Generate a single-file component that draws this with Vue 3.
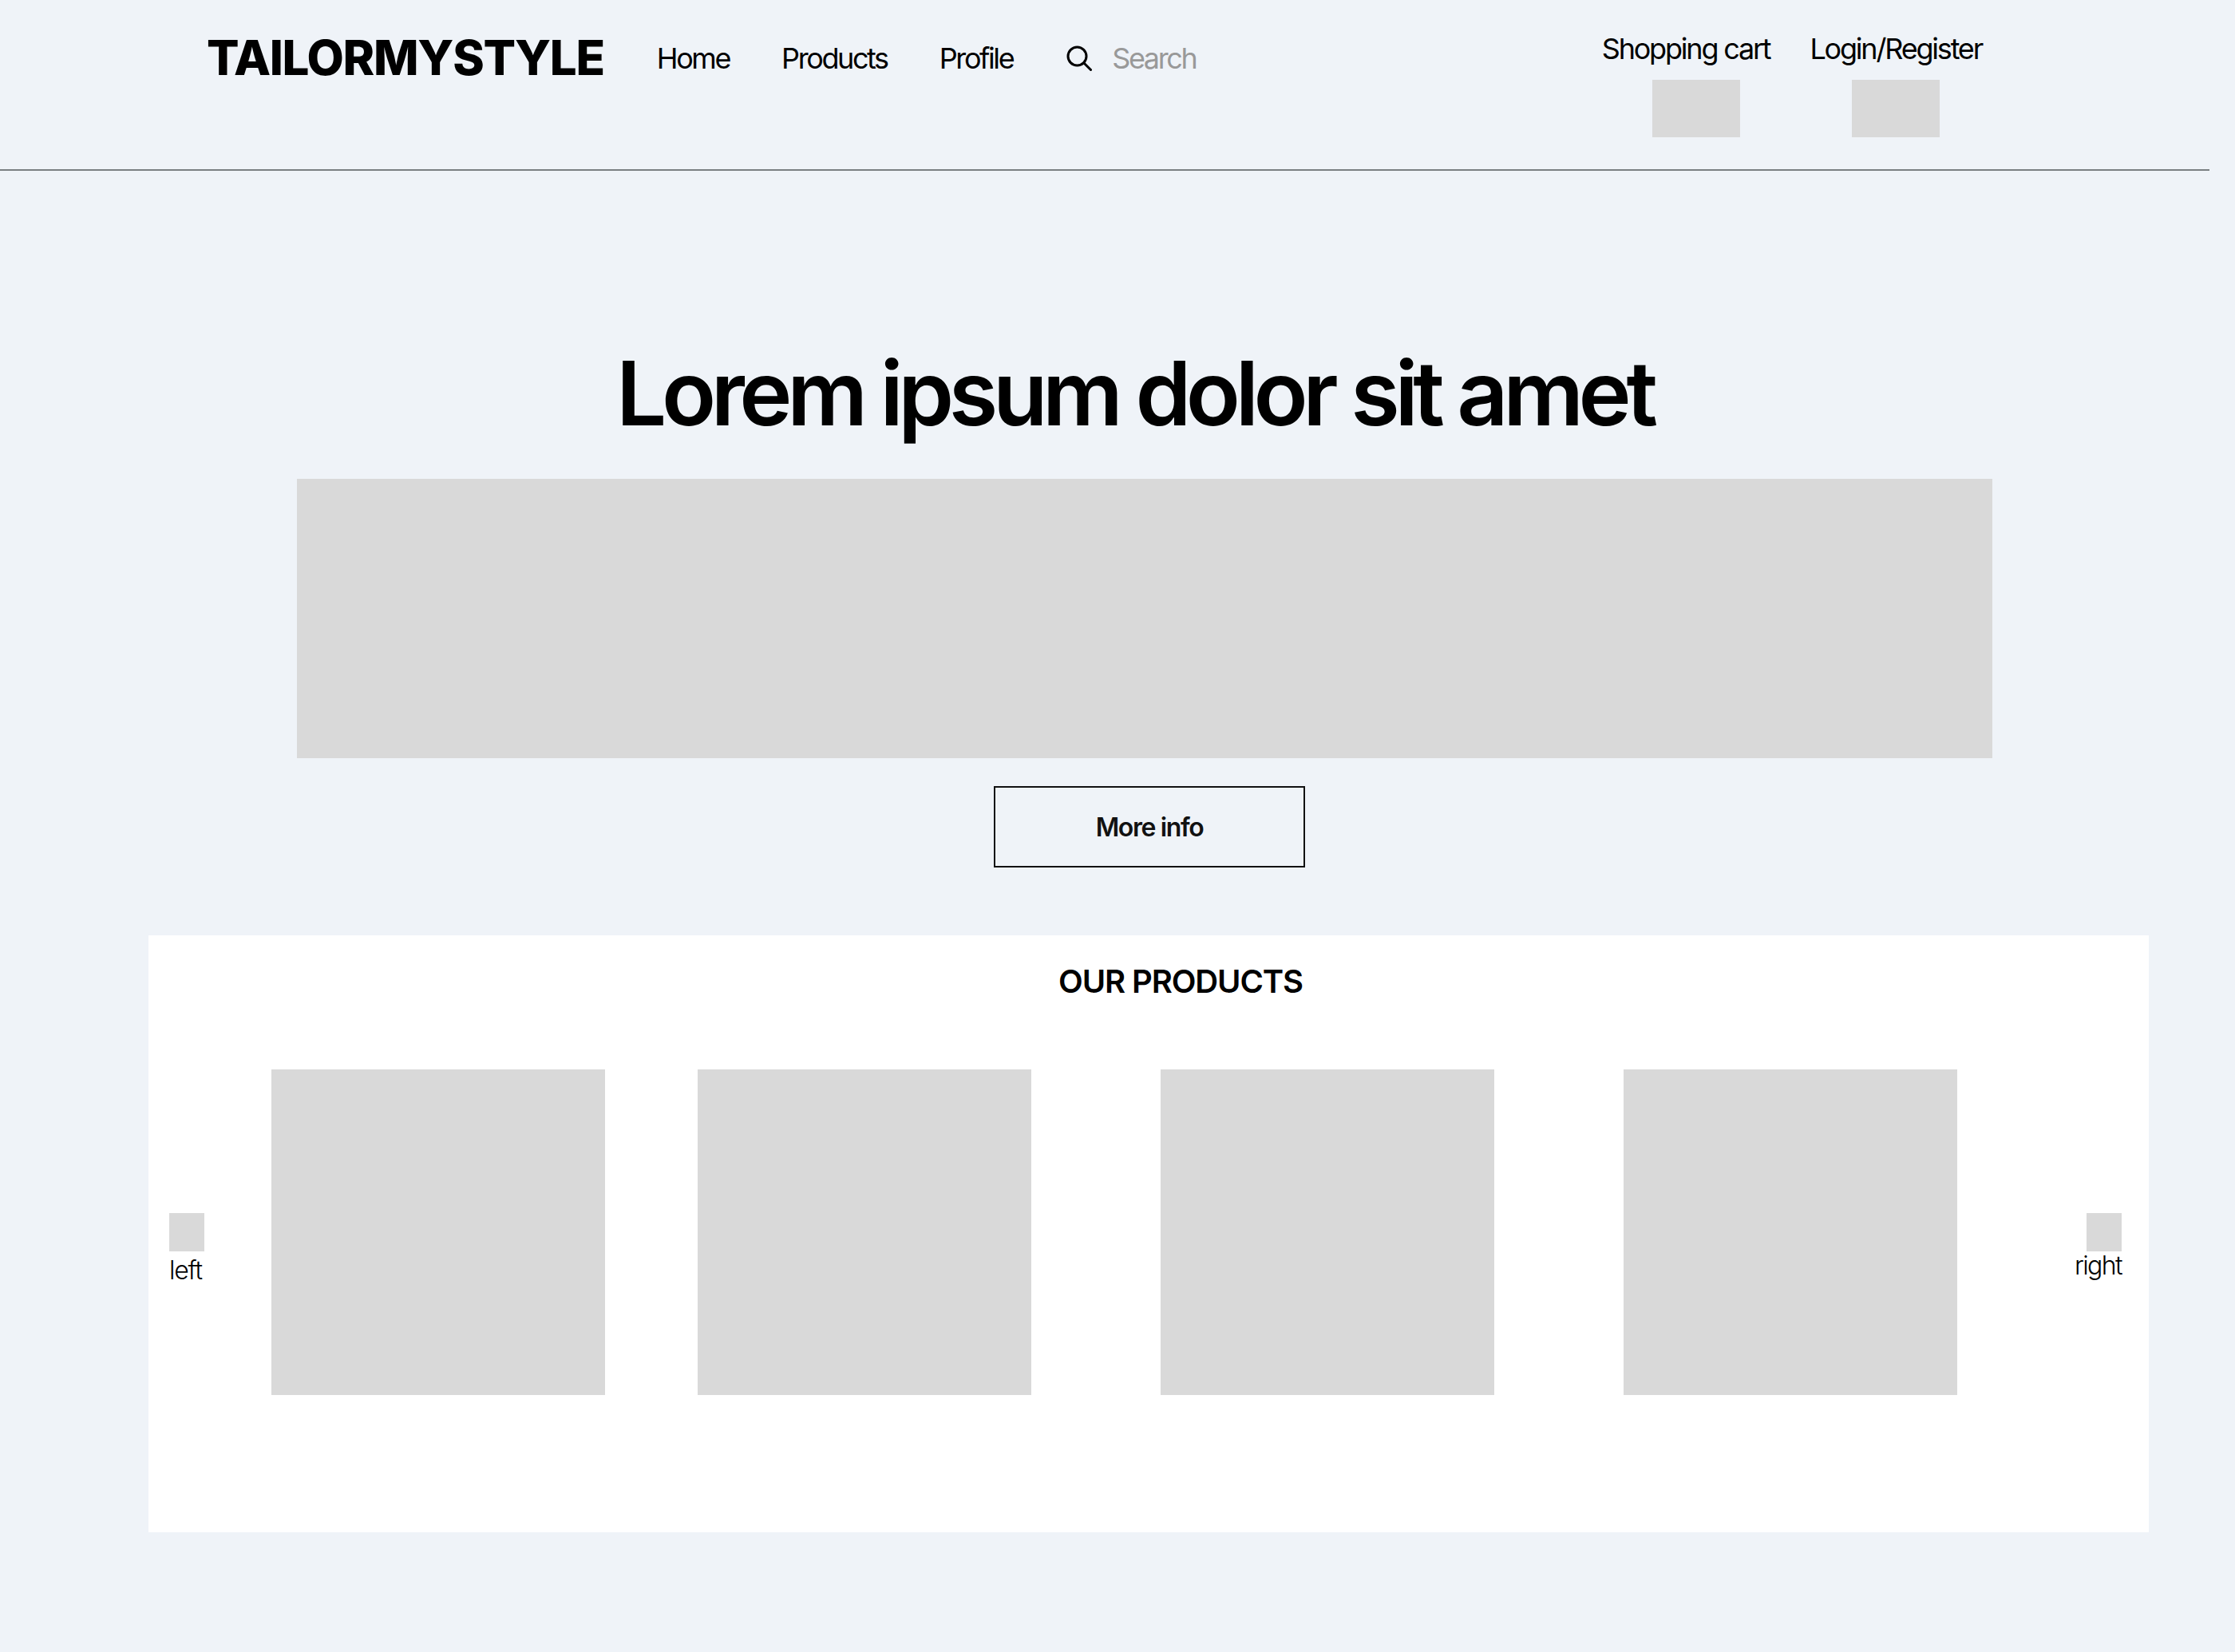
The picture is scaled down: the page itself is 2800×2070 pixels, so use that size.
<template>
  <div class="page">
    <!-- Header -->
    <header class="topbar">
      <div class="logo">TAILORMYSTYLE</div>
      <nav class="nav">
        <a v-for="link in links" :key="link" href="#">{{ link }}</a>
      </nav>
      <div class="search">
        <svg class="search-icon" viewBox="0 0 32 32" fill="none" stroke="#000" stroke-width="3" stroke-linecap="round">
          <circle cx="13.5" cy="13.5" r="11.5" />
          <path d="M22 22 L30.5 30.5" />
        </svg>
        <span>Search</span>
      </div>
      <div class="account">
        <div class="account-item cart">
          <span>Shopping cart</span>
          <div class="placeholder"></div>
        </div>
        <div class="account-item login">
          <span>Login/Register</span>
          <div class="placeholder"></div>
        </div>
      </div>
    </header>

    <!-- Hero -->
    <section class="hero">
      <h1>Lorem ipsum dolor sit amet</h1>
      <div class="hero-image"></div>
      <button class="more-btn">More info</button>
    </section>

    <!-- Products -->
    <section class="products">
      <h2>OUR PRODUCTS</h2>
      <div class="carousel">
        <div class="arrow left">
          <div class="arrow-box"></div>
          <span>left</span>
        </div>
        <div class="card" v-for="n in 4" :key="n"></div>
        <div class="arrow right">
          <div class="arrow-box"></div>
          <span>right</span>
        </div>
      </div>
    </section>
  </div>
</template>

<script setup>
const links = ['Home', 'Products', 'Profile']
</script>

<style scoped>
.page {
  width: 2800px;
  height: 2070px;
  overflow: hidden;
  background-color: #eff3f8;
  color: #000;
  font-family: Inter, "Liberation Sans", sans-serif;
}

.topbar {
  width: 2768px;
  height: 214px;
  box-sizing: border-box;
  border-bottom: 2px solid #7a7f82;
  padding-left: 259px;
  display: flex;
  align-items: flex-start;
}

.logo {
  margin-top: 36px;
  font-size: 60px;
  line-height: 72px;
  font-weight: 800;
  letter-spacing: -1.3px;
  white-space: nowrap;
}

.nav {
  margin-top: 51px;
  margin-left: 66px;
  display: flex;
  gap: 65px;
}

.nav a {
  font-size: 36px;
  line-height: 44px;
  letter-spacing: -2.4px;
  color: #000;
  text-decoration: none;
}

.search {
  margin-top: 51px;
  margin-left: 67px;
  display: flex;
  align-items: center;
  gap: 25px;
  font-size: 36px;
  line-height: 44px;
  letter-spacing: -2.4px;
  color: #999;
}

.search-icon {
  width: 32px;
  height: 32px;
}

.account {
  margin-left: auto;
  margin-right: 285px;
  margin-top: 39px;
  display: flex;
  gap: 50px;
}

.account-item {
  display: flex;
  flex-direction: column;
  font-size: 36px;
  line-height: 44px;
  letter-spacing: -2.2px;
  white-space: nowrap;
}

.placeholder {
  width: 110px;
  height: 72px;
  margin-top: 17px;
  background-color: #d9d9d9;
}

.cart .placeholder {
  margin-left: 63px;
}

.login .placeholder {
  margin-left: 53px;
}

.hero {
  display: flex;
  flex-direction: column;
  align-items: flex-start;
}

.hero h1 {
  margin: 210px 0 0 772px;
  font-size: 112px;
  line-height: 136px;
  font-weight: 600;
  letter-spacing: -6.4px;
  white-space: nowrap;
}

.hero-image {
  width: 2124px;
  height: 350px;
  margin: 40px 0 0 372px;
  background-color: #d9d9d9;
}

.more-btn {
  width: 390px;
  height: 102px;
  margin: 35px 0 0 1245px;
  border: 2px solid #111;
  background: transparent;
  color: #111;
  font-family: inherit;
  font-size: 32px;
  font-weight: 600;
  letter-spacing: -1.4px;
}

.products {
  width: 2506px;
  height: 748px;
  margin: 85px 0 0 186px;
  background-color: #fff;
  padding-top: 34px;
  box-sizing: border-box;
}

.products h2 {
  margin: 0 0 0 1140px;
  font-size: 40px;
  line-height: 48px;
  font-weight: 600;
  letter-spacing: -1.1px;
  white-space: nowrap;
}

.carousel {
  margin-top: 86px;
  display: flex;
  align-items: flex-start;
}

.card {
  width: 418px;
  height: 408px;
  margin-left: 162px;
  background-color: #d9d9d9;
  flex-shrink: 0;
}

.arrow + .card {
  margin-left: 84px;
}

.arrow + .card + .card {
  margin-left: 116px;
}

.arrow {
  margin-top: 180px;
  font-size: 32px;
  line-height: 40px;
  font-weight: 300;
  flex-shrink: 0;
  display: flex;
  flex-direction: column;
}

.arrow.left {
  width: 44px;
  margin-left: 26px;
  white-space: nowrap;
  letter-spacing: -1.3px;
}

.arrow.left span {
  margin-top: 4px;
}

.arrow.right {
  margin-left: 147px;
  align-items: flex-end;
  letter-spacing: -1.6px;
}

.arrow.right span {
  margin-top: -2px;
}

.arrow-box {
  width: 44px;
  height: 48px;
  background-color: #d9d9d9;
}
</style>
